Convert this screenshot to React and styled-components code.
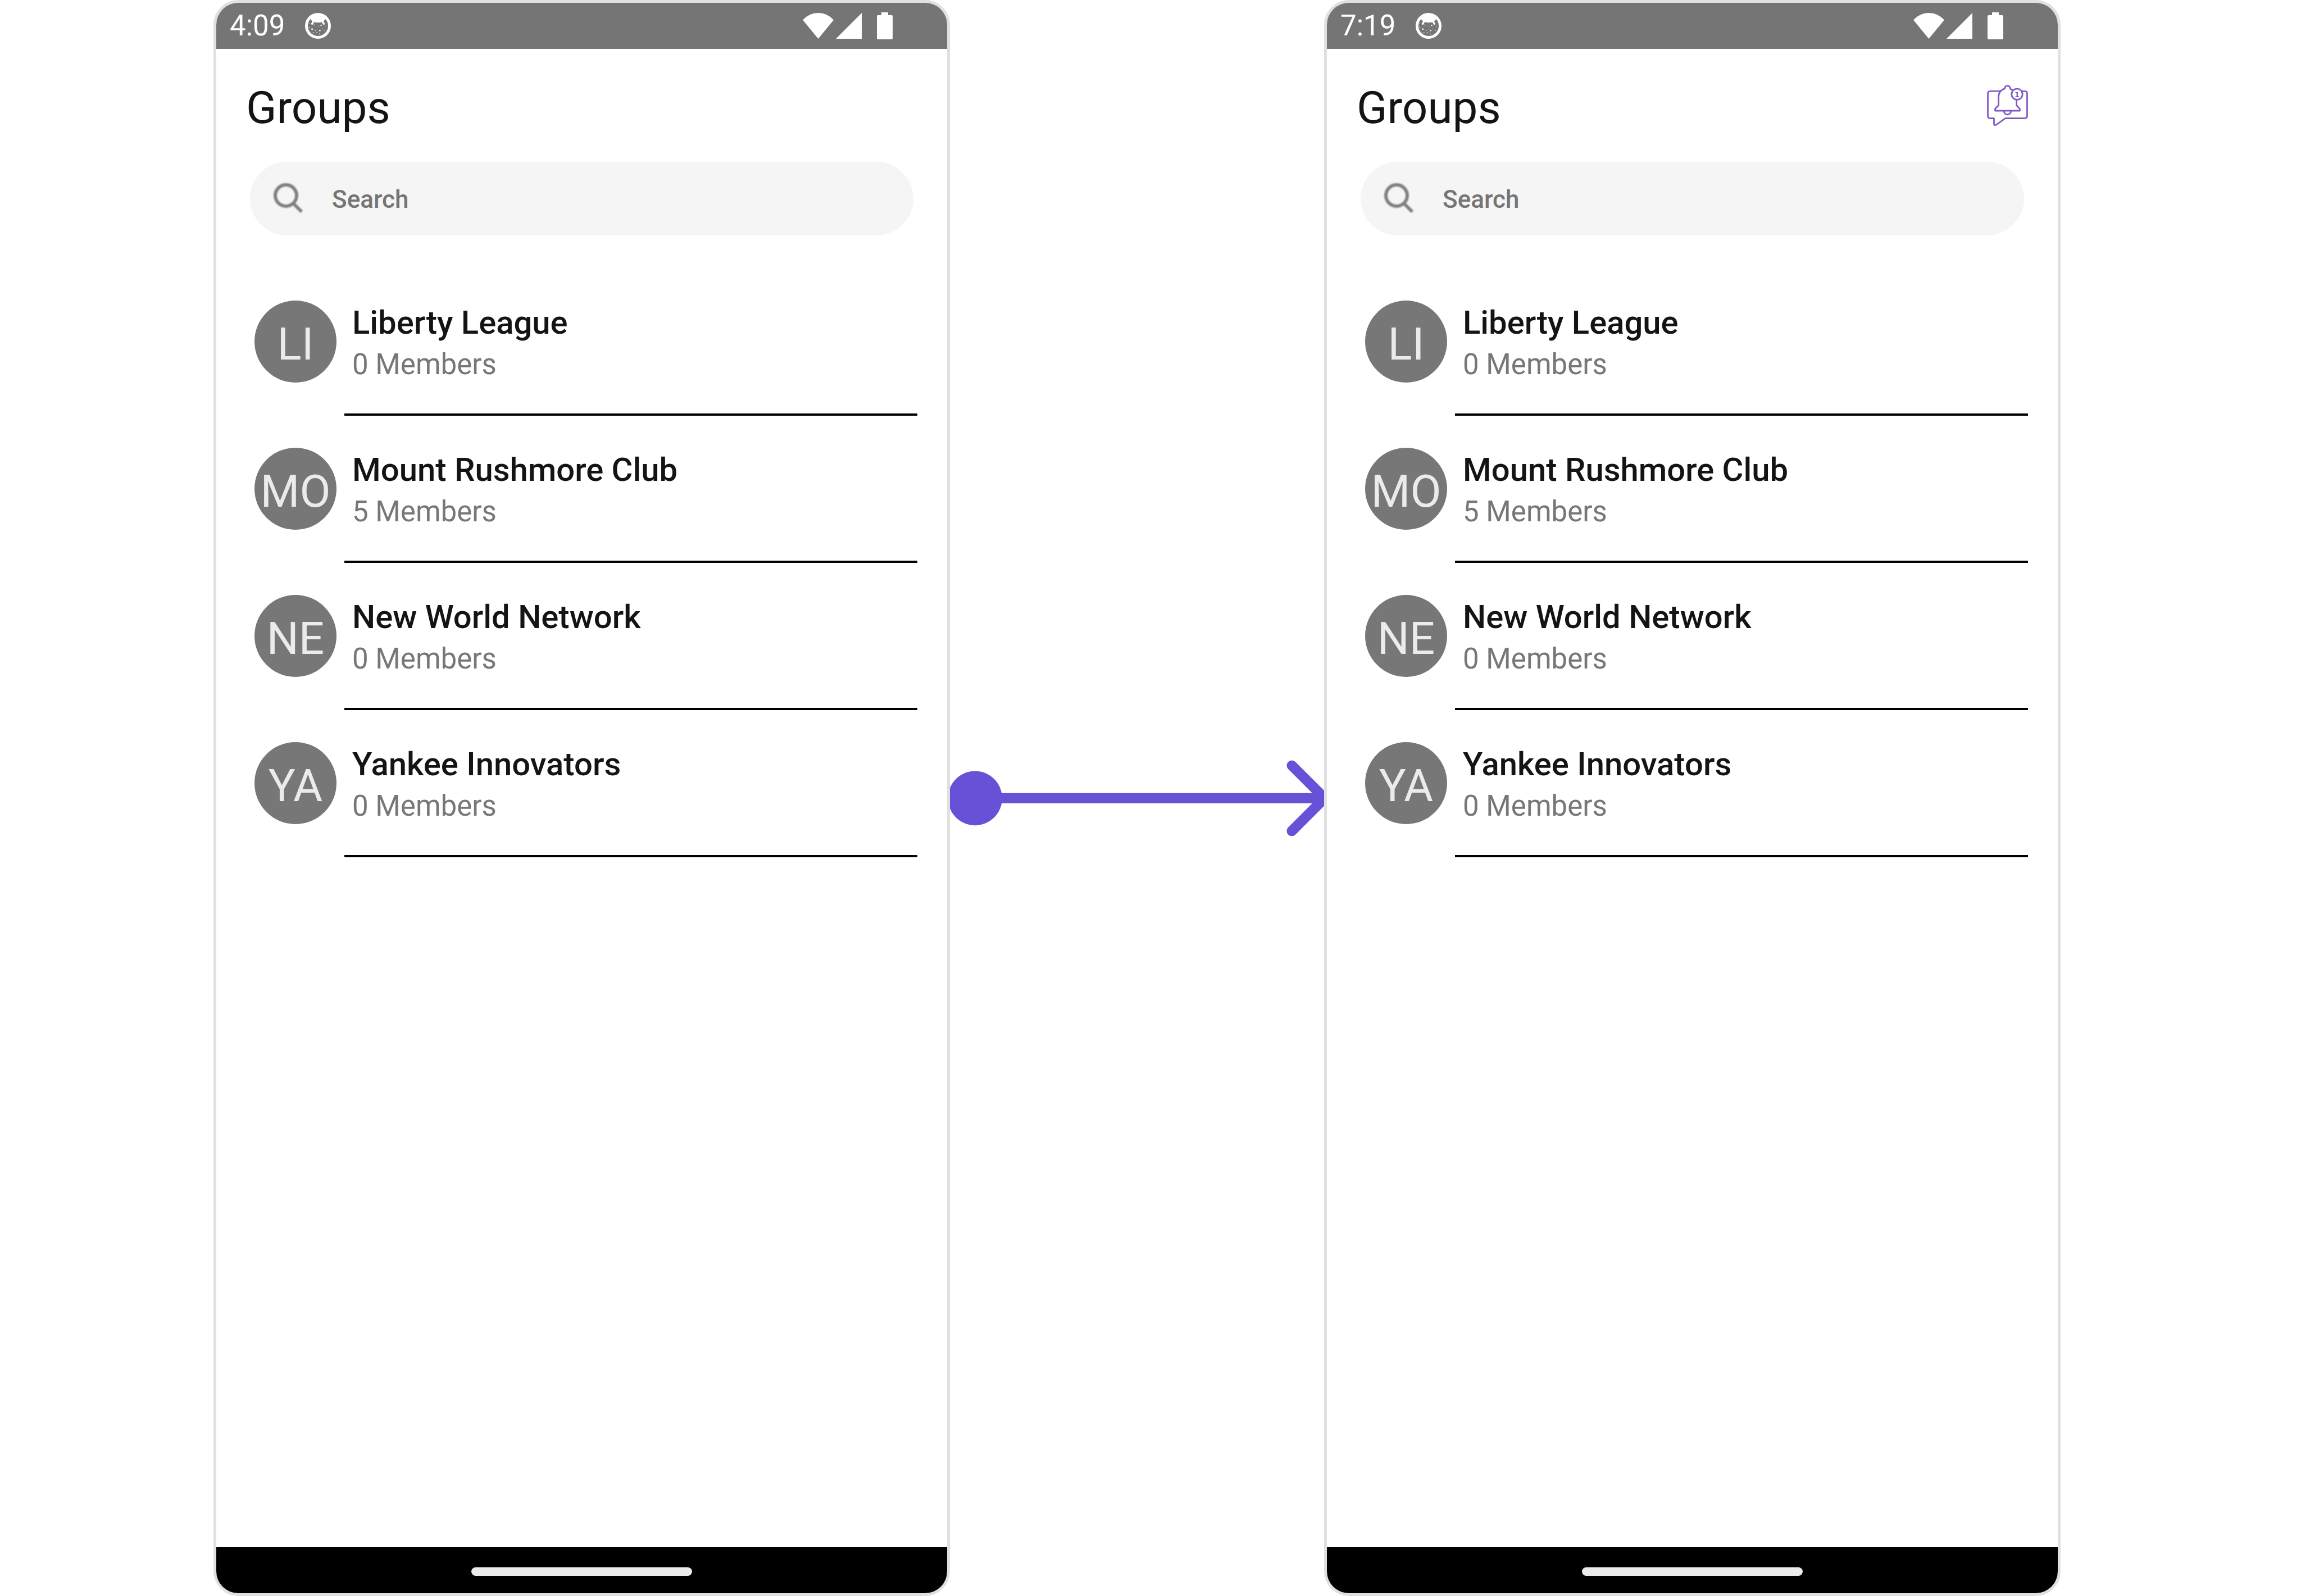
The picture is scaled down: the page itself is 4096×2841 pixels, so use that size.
import React from "react";
import styled, { createGlobalStyle } from "styled-components";

const GlobalStyle = createGlobalStyle`
  *, *::before, *::after { box-sizing: border-box; }
  body {
    margin: 0;
    background: #ffffff;
    color: #141414;
    font-family: Roboto, "Liberation Sans", sans-serif;
  }
`;

const Board = styled.main`
  display: grid;
  grid-template-columns: 380fr 1311fr 666fr 1311fr 428fr;
  min-height: 100vh;
`;

const Phone = styled.section`
  grid-column: ${(p) => p.$column};
  display: flex;
  flex-direction: column;
  min-width: 0;
  border: 5px solid #e0e0e0;
  border-radius: 44px;
  overflow: hidden;
  background: #ffffff;
`;

const StatusBar = styled.div`
  display: flex;
  align-items: center;
  gap: 36px;
  height: 82px;
  padding: 0 74px 0 24px;
  background: #757575;
  color: #ffffff;
`;

const Clock = styled.time`
  font-size: 51px;
  line-height: 60px;
`;

const StatusIcons = styled.div`
  display: flex;
  align-items: center;
  gap: 4px;
  margin-left: auto;
`;

const Glyph = styled.svg`
  display: block;
  flex: none;
`;

const Header = styled.header`
  display: flex;
  align-items: flex-start;
  justify-content: space-between;
  padding: 58px 53px 0;
`;

const Title = styled.h1`
  margin: 0;
  font-size: 80px;
  font-weight: 400;
  line-height: 94px;
`;

const IconButton = styled.button`
  padding: 6px 0;
  border: 0;
  background: none;
  cursor: pointer;
`;

const SearchBox = styled.label`
  display: flex;
  align-items: center;
  gap: 50px;
  height: 131px;
  margin: 49px 60px 59px;
  padding: 2px 36px 0;
  border-radius: 66px;
  background: #f5f5f5;
`;

const SoftGlyph = styled(Glyph)`
  filter: blur(1px);
`;

const SearchInput = styled.input`
  flex: 1;
  min-width: 0;
  padding: 0;
  border: 0;
  outline: 0;
  background: none;
  color: #141414;
  font-family: inherit;
  font-size: 44px;
  font-weight: 500;
  line-height: 52px;

  &::placeholder {
    color: #757575;
    opacity: 1;
  }
`;

const List = styled.ul`
  flex: 1;
  margin: 0;
  padding: 0 53px 0 68px;
  list-style: none;
`;

const Row = styled.li`
  display: flex;
  align-items: flex-start;
  gap: 14px;
`;

const Avatar = styled.div`
  display: flex;
  flex: none;
  align-items: center;
  justify-content: center;
  width: 146px;
  height: 146px;
  margin-top: 57px;
  padding-top: 9px;
  border-radius: 50%;
  background: #777777;
  color: #ebebeb;
  font-size: 80px;
  line-height: 94px;
`;

const Details = styled.div`
  flex: 1;
  min-width: 0;
  padding: 58px 0 50px 14px;
  border-bottom: 4px solid #000000;
`;

const Name = styled.div`
  font-size: 58px;
  font-weight: 500;
  line-height: 76px;
`;

const Members = styled.div`
  color: #777777;
  font-size: 51px;
  line-height: 74px;
`;

const NavBar = styled.div`
  display: flex;
  align-items: center;
  justify-content: center;
  height: 82px;
  padding-top: 5px;
  background: #000000;
`;

const HomeHandle = styled.div`
  width: 393px;
  height: 15px;
  border-radius: 8px;
  background: #ebebeb;
`;

const Arrow = styled.svg`
  display: block;
  align-self: center;
  width: 100%;
  overflow: hidden;
`;

const DOTS = [
  [24, 62, 4], [24, 84, 5], [41, 94, 8], [54, 70, 5], [77, 77, 4],
  [93, 72, 7], [122, 77, 4], [99, 93, 4], [86, 102, 8], [61, 100, 5],
  [48, 115, 5], [69, 115, 5], [84, 122, 5], [114, 100, 5],
];

function FaceIcon() {
  return (
    <Glyph width="46" height="46" viewBox="0 0 150 150" fill="#fff" aria-hidden="true">
      <circle cx="75" cy="75" r="67" fill="none" stroke="#fff" strokeWidth="16" />
      <path d="M16 44 L31 36 Q38 46 50 52 Q75 60 100 52 Q112 46 119 36 L134 44 Q116 4 75 4 Q34 4 16 44 Z" />
      <path d="M50 48 L41 63 M100 48 L109 63" stroke="#fff" strokeWidth="11" strokeLinecap="round" />
      {DOTS.map(([x, y, s]) => (
        <rect key={`${x}-${y}`} x={x - s / 2} y={y - s / 2} width={s} height={s} />
      ))}
    </Glyph>
  );
}

function WifiIcon() {
  return (
    <Glyph width="55" height="46" viewBox="0 0 180 150" fill="#fff" aria-hidden="true">
      <path d="M90 150 L0 41 Q38 0 90 0 Q142 0 180 41 Z" />
    </Glyph>
  );
}

function SignalIcon() {
  return (
    <Glyph width="46" height="46" viewBox="0 0 50 50" fill="#fff" aria-hidden="true">
      <path d="M0 50 L50 0 V50 Z" />
    </Glyph>
  );
}

function BatteryIcon() {
  return (
    <Glyph width="74" height="48" viewBox="0 0 74 48" fill="#fff" aria-hidden="true">
      <path d="M31 0 H43 V5 H49 Q51 5 51 7 V46 Q51 48 49 48 H25 Q23 48 23 46 V7 Q23 5 25 5 H31 Z" />
    </Glyph>
  );
}

function SearchIcon() {
  return (
    <SoftGlyph width="60" height="60" viewBox="0 0 60 60" fill="none" stroke="#808080" strokeWidth="6" aria-hidden="true">
      <circle cx="28" cy="23" r="19" />
      <path d="M41 37 L56 52" />
    </SoftGlyph>
  );
}

function InviteIcon() {
  return (
    <Glyph
      width="73"
      height="73"
      viewBox="0 0 240 240"
      fill="none"
      stroke="#7e57c2"
      strokeWidth="9"
      strokeLinejoin="round"
      aria-hidden="true"
    >
      <path d="M80 37 H20 Q5 37 5 52 V181 Q5 196 20 196 H41 V228 Q41 239 54 234 L107 196 H220 Q235 196 235 181 V52 Q235 37 220 37 H205" />
      <path d="M153 32 L137 24 Q134 5 120 5 Q106 5 104 22 Q68 34 68 70 V120 L48 140 V152 H192 V140 L173 120 V88" />
      <path d="M99 154 Q102 174 120 174 Q138 174 141 154" />
      <circle cx="176" cy="55" r="32" />
      <text
        x="176"
        y="71"
        fill="#7e57c2"
        stroke="none"
        fontFamily="DejaVu Sans, sans-serif"
        fontSize="42"
        fontWeight="700"
        textAnchor="middle"
      >
        1
      </text>
    </Glyph>
  );
}

const GROUPS = [
  { initials: "LI", name: "Liberty League", members: 0 },
  { initials: "MO", name: "Mount Rushmore Club", members: 5 },
  { initials: "NE", name: "New World Network", members: 0 },
  { initials: "YA", name: "Yankee Innovators", members: 0 },
];

function GroupsScreen({ column, time, showInvite }) {
  return (
    <Phone $column={column}>
      <StatusBar>
        <Clock>{time}</Clock>
        <FaceIcon />
        <StatusIcons>
          <WifiIcon />
          <SignalIcon />
          <BatteryIcon />
        </StatusIcons>
      </StatusBar>
      <Header>
        <Title>Groups</Title>
        {showInvite && (
          <IconButton type="button" aria-label="Notifications">
            <InviteIcon />
          </IconButton>
        )}
      </Header>
      <SearchBox>
        <SearchIcon />
        <SearchInput type="text" placeholder="Search" aria-label="Search" />
      </SearchBox>
      <List>
        {GROUPS.map((g) => (
          <Row key={g.name}>
            <Avatar>{g.initials}</Avatar>
            <Details>
              <Name>{g.name}</Name>
              <Members>{g.members} Members</Members>
            </Details>
          </Row>
        ))}
      </List>
      <NavBar>
        <HomeHandle />
      </NavBar>
    </Phone>
  );
}

export default function App() {
  return (
    <>
      <GlobalStyle />
      <Board>
        <GroupsScreen column={2} time="4:09" />
        <Arrow viewBox="0 -9 731 160" fill="none" stroke="#6851d6" strokeWidth="20" aria-hidden="true">
          <circle cx="49" cy="71" r="53" fill="#6851d6" stroke="none" />
          <path d="M49 71 H731" />
          <path d="M668 7 L732 71 L668 135" strokeLinecap="round" />
        </Arrow>
        <GroupsScreen column={4} time="7:19" showInvite />
      </Board>
    </>
  );
}
